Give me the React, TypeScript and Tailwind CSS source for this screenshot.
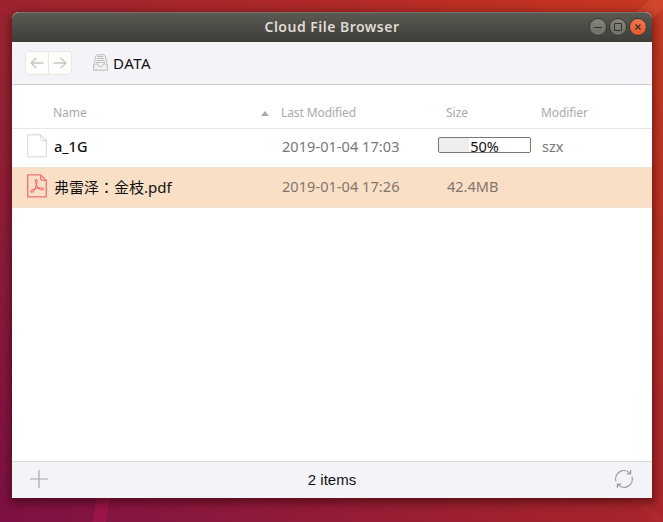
import type { ReactNode } from "react";

const columns = "grid grid-cols-[41px_228px_165px_95px_1fr]";

function Wallpaper() {
  return (
    <svg className="absolute inset-0 h-full w-full" viewBox="0 0 663 522" preserveAspectRatio="none" aria-hidden="true">
      <defs>
        <linearGradient id="top" x1="0" x2="1">
          <stop offset="0" stopColor="#9d2530" />
          <stop offset="0.45" stopColor="#ae2929" />
          <stop offset="0.75" stopColor="#bd3024" />
          <stop offset="1" stopColor="#c83a24" />
        </linearGradient>
        <linearGradient id="bottom" x1="0" x2="1">
          <stop offset="0" stopColor="#7c1044" />
          <stop offset="0.2" stopColor="#861542" />
          <stop offset="0.55" stopColor="#961d35" />
          <stop offset="1" stopColor="#a8252b" />
        </linearGradient>
        <linearGradient id="fade" x1="0" y1="0" x2="0" y2="1">
          <stop offset="0" stopColor="#fff" stopOpacity="0" />
          <stop offset="1" stopColor="#fff" />
        </linearGradient>
        <mask id="lower">
          <rect width="663" height="522" fill="url(#fade)" />
        </mask>
      </defs>
      <rect width="663" height="522" fill="url(#top)" />
      <rect width="663" height="522" fill="url(#bottom)" mask="url(#lower)" />
      <path d="M96 498H110L106 522H93Z" fill="#b01852" opacity="0.5" />
      <path d="M408 12L414 0H663V12Z" fill="#d03a1e" opacity="0.1" />
      <path d="M636 12L650 0H663V8L652 20Z" fill="#e05b3c" opacity="0.4" />
      <path d="M630 498L656 522H663V518L642 498Z" fill="#c83a3c" opacity="0.2" />
    </svg>
  );
}

function NavButton({ children }: { children: ReactNode }) {
  return (
    <button className="flex h-[22px] w-[22px] items-center justify-center bg-[#fdfdfc]">
      <svg width="14" height="12" viewBox="0 0 14 12" fill="none" stroke="#c8c8c0" strokeWidth="1.3">
        {children}
      </svg>
    </button>
  );
}

function InboxIcon() {
  return (
    <svg width="15" height="17" viewBox="0 0 15 17" fill="none" stroke="#bcbcbc">
      <path d="M1.2 9L2.8 2.3Q3.2 .7 4.8 .7H10.2Q11.8 .7 12.2 2.3L13.8 9" />
      <path d="M4.5 2.5H10.5M4 4.5H11M3.5 6.5H11.5M3 8.5H12" />
      <path d="M.7 10H4.7Q5 12.4 7.5 12.4T10.3 10H14.3V16.2H.7Z" fill="#f1f1f2" />
    </svg>
  );
}

function FileIcon({ pdf = false }: { pdf?: boolean }) {
  return (
    <svg width="20" height="24" viewBox="0 0 20 24" fill="none" stroke={pdf ? "#ed7470" : "#d5d5d5"} strokeWidth={pdf ? 1.3 : 1}>
      <path d="M.7 .8H13.7L19.3 6.5V22.9H.7Z" />
      <path d="M13.7 .8V4.2Q13.8 6.3 16 6.4H19.3" />
      {pdf && (
        <g strokeWidth="1.1">
          <path d="M9.2 10.5C8.4 8.2 8.1 5.6 9.2 5.5C10.5 5.4 10.3 8.2 9.4 11C8.3 14.4 6.3 18.2 4.7 18.3C3.3 18.4 3.5 16.8 5.3 15.8C7.5 14.6 11.5 13.8 14.2 13.8C17.2 13.8 17.3 15.7 15.3 15.7C12.7 15.7 10.3 13.4 9.2 10.5Z" />
        </g>
      )}
    </svg>
  );
}

function RefreshIcon() {
  return (
    <svg width="20" height="20" viewBox="0 0 20 20" fill="none" stroke="#9c9c9e" strokeWidth="1.2">
      <path d="M2 12.4A8.3 8.3 0 0 1 15.8 4.1M18 7.6A8.3 8.3 0 0 1 4.2 15.9" />
      <path d="M16.6 1V4.8H12.8M3.4 19V15.2H7.2" />
    </svg>
  );
}

function WindowButton({ close = false, children }: { close?: boolean; children: ReactNode }) {
  return (
    <button
      className={
        close
          ? "h-[18px] w-[18px] rounded-full border border-[#383732] bg-linear-to-b from-[#f37850] to-[#e6562b]"
          : "h-[18px] w-[18px] rounded-full border border-[#383732] bg-linear-to-b from-[#85847d] to-[#706f67]"
      }
    >
      <svg width="16" height="16" viewBox="0 0 16 16" fill="none" stroke="#34332e">
        {children}
      </svg>
    </button>
  );
}

export default function App() {
  return (
    <div className="relative h-[522px] w-[663px] overflow-hidden p-3 pr-[11px] font-['Noto_Sans','Noto_Sans_CJK_JP',sans-serif]">
      <Wallpaper />
      <main className="relative flex h-[486px] w-[640px] flex-col rounded-t-[7px] bg-white shadow-[0_3px_10px_2px_rgba(35,0,0,0.5)]">
        <header className="grid h-[30px] shrink-0 grid-cols-[1fr_auto_1fr] items-center rounded-t-[7px] border-t border-[#74736b] bg-linear-to-b from-[#5a5952] to-[#3e3d38]">
          <span />
          <h1 className="pb-px text-[14px] leading-5 font-semibold tracking-[0.48px] text-[#dfdbd2]">Cloud File Browser</h1>
          <div className="flex justify-end gap-[2px] pr-[5px] pb-px">
            <WindowButton><path d="M4 8.5H12" /></WindowButton>
            <WindowButton><path d="M4.5 4.5H11.5V11.5H4.5Z" /></WindowButton>
            <WindowButton close><path d="M5.5 5.5L10.5 10.5M10.5 5.5L5.5 10.5" strokeWidth="1.3" /></WindowButton>
          </div>
        </header>

        <nav className="flex h-[43px] shrink-0 items-center border-b border-[#cfcfd0] bg-[#f4f4f8] pl-[13px]">
          <div className="flex gap-px overflow-hidden rounded-[4px] border border-[#ebe8e1] bg-[#ebe8e1]">
            <NavButton><path d="M13.5 6H1M6.5 .8L1 6L6.5 11.2" /></NavButton>
            <NavButton><path d="M.5 6H13M7.5 .8L13 6L7.5 11.2" /></NavButton>
          </div>
          <div className="ml-[21px] flex items-center gap-[5px]">
            <div className="pb-px"><InboxIcon /></div>
            <span className="text-[15px] leading-5 tracking-[0.5px] text-[#111]">DATA</span>
          </div>
        </nav>

        <section className="flex-1">
          <div className={`${columns} h-11 items-start border-b border-[#e7e7e7] pt-[18px] text-[12px] leading-5 text-[#aaa]`}>
            <span />
            <div className="flex items-center justify-between pr-3">
              <span>Name</span>
              <svg className="mt-px" width="8" height="5" viewBox="0 0 8 5" fill="#aaa"><path d="M4 0L8 5H0Z" /></svg>
            </div>
            <span className="tracking-[-0.1px]">Last Modified</span>
            <span>Size</span>
            <span className="tracking-[-0.1px]">Modifier</span>
          </div>
          <div className={`${columns} h-[38px] items-center text-[14.5px] leading-5 text-[#777]`}>
            <div className="pb-[5px] pl-[14.5px]"><FileIcon /></div>
            <span className="pb-[5px] pl-px font-medium text-[#111]">a_1G</span>
            <span className="pb-[5px] pl-px tracking-[0.06px]">2019-01-04 17:03</span>
            <div className="-ml-2 mb-[7px] h-4 w-[93px] rounded-[2px] border border-[#777] bg-linear-to-r from-[#eee] from-33% to-white to-33% text-center text-[14.5px] leading-[16px] text-[#111]">50%</div>
            <span className="pb-[5px] pl-px">szx</span>
          </div>
          <div className={`${columns} h-[41px] items-center border-t border-b border-[#efe1d3] bg-[#fadfc7] text-[14.5px] leading-5 text-[#81766c]`}>
            <div className="pb-[3px] pl-[14.5px]"><FileIcon pdf /></div>
            <span className="pb-[2px] pl-px text-[15px] text-[#111]">弗雷泽：金枝.pdf</span>
            <span className="pb-[3px] pl-px tracking-[0.06px]">2019-01-04 17:26</span>
            <span className="pb-[3px] pl-px">42.4MB</span>
            <span />
          </div>
        </section>

        <footer className="grid h-[37px] shrink-0 grid-cols-[1fr_auto_1fr] items-center border-t border-[#d8d8d9] bg-[#f4f4f8] px-[18px]">
          <svg className="mb-[2px]" width="18" height="18" viewBox="0 0 18 18" stroke="#a8a8aa" strokeWidth="1.2"><path d="M0 9H18M9 0V18" /></svg>
          <span className="font-['Liberation_Sans',sans-serif] text-[15px] leading-5 text-[#111]">2 items</span>
          <div className="flex justify-end pb-[2px]"><RefreshIcon /></div>
        </footer>
      </main>
    </div>
  );
}
